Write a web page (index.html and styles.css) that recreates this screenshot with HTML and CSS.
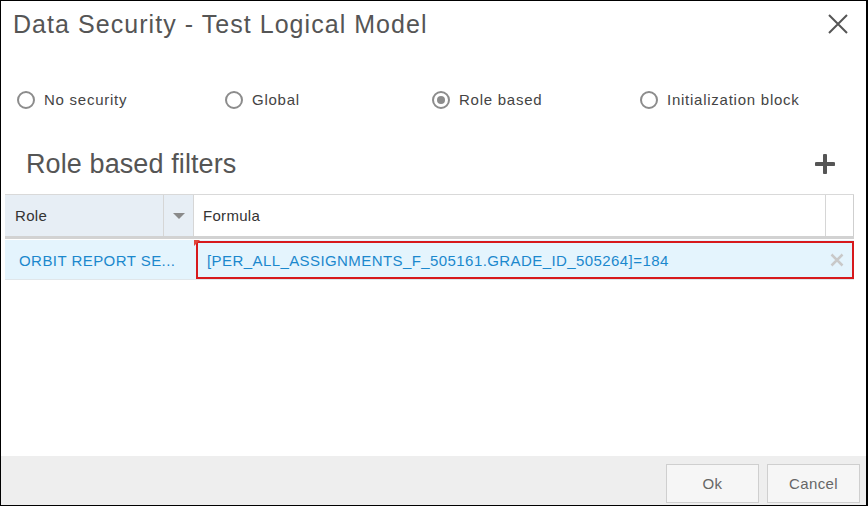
FILE: index.html
```html
<!DOCTYPE html>
<html>
<head>
<meta charset="utf-8">
<link rel="stylesheet" href="styles.css">
</head>
<body>
<div class="dialog">
  <div class="content">
    <div class="header">
      <div class="title">Data Security - Test Logical Model</div>
      <svg class="close" width="20" height="20" viewBox="0 0 20 20"><path d="M1 1 L19 19 M19 1 L1 19" stroke="#555" stroke-width="2" fill="none"/></svg>
    </div>
    <div class="radios">
      <label class="radio"><span class="circle"></span>No security</label>
      <label class="radio"><span class="circle"></span>Global</label>
      <label class="radio"><span class="circle checked"></span>Role based</label>
      <label class="radio"><span class="circle"></span>Initialization block</label>
    </div>
    <div class="section">
      <div class="heading">Role based filters</div>
      <svg class="plus" width="20" height="20" viewBox="0 0 20 20"><path d="M10 1.5 V18.5 M1.5 10 H18.5" stroke="#555" stroke-width="4" stroke-linecap="round" fill="none"/></svg>
    </div>
    <div class="table">
      <div class="thead">
        <div class="th role">Role</div>
        <div class="th sort"><span class="tri"></span></div>
        <div class="th formula">Formula</div>
        <div class="th last"></div>
      </div>
      <div class="trow">
        <div class="td role-val">ORBIT REPORT SE...</div>
        <div class="td formula-val">
          <span class="marker"></span>
          <div class="edit">
            <span class="ftext">[PER_ALL_ASSIGNMENTS_F_505161.GRADE_ID_505264]=184</span>
            <svg class="clear" width="14" height="14" viewBox="0 0 14 14"><path d="M1.5 1.5 L12.5 12.5 M12.5 1.5 L1.5 12.5" stroke="#c9c9c9" stroke-width="2.5" fill="none"/></svg>
          </div>
        </div>
      </div>
    </div>
  </div>
  <div class="footer">
    <button class="btn">Ok</button>
    <button class="btn">Cancel</button>
  </div>
</div>
</body>
</html>
```
FILE: styles.css
```css
* { box-sizing: border-box; }
html, body { margin: 0; padding: 0; background: #fff; }
body { font-family: "Liberation Sans", Arial, sans-serif; }

.dialog {
  width: 868px;
  height: 506px;
  border: 1px solid #000;
  border-right-width: 2px;
  display: flex;
  flex-direction: column;
  background: #fff;
}
.content { flex: 1; display: flex; flex-direction: column; }

.header {
  height: 46px;
  display: flex;
  align-items: center;
  justify-content: space-between;
  padding: 0 18px 0 12px;
}
.title {
  font-size: 25px;
  line-height: 48px;
  color: #555;
  letter-spacing: 1.05px;
}
.close { display: block; }

.radios {
  margin-top: 42px;
  height: 22px;
  display: grid;
  grid-template-columns: 208px 207px 208px 208px;
  padding-left: 16px;
}
.radio {
  display: flex;
  align-items: center;
  font-size: 15px;
  line-height: 22px;
  color: #444;
  letter-spacing: 0.75px;
}
.circle {
  width: 18px;
  height: 18px;
  border: 2px solid #8c8c8c;
  border-radius: 50%;
  margin-right: 9px;
  display: flex;
  align-items: center;
  justify-content: center;
}
.circle.checked::after {
  content: "";
  width: 8px;
  height: 8px;
  border-radius: 50%;
  background: #8c8c8c;
}

.section {
  margin-top: 33px;
  height: 40px;
  display: flex;
  align-items: center;
  justify-content: space-between;
  padding: 0 31px 0 25px;
}
.heading {
  font-size: 27px;
  line-height: 40px;
  color: #555;
  letter-spacing: 0.1px;
}
.plus { display: block; }

.table {
  margin: 10px 0 0 4px;
  width: 849px;
}
.thead {
  display: grid;
  grid-template-columns: 159px 30px 632px 28px;
  height: 45px;
  border-top: 1px solid #d9d9d9;
  border-bottom: 3px solid #d2d2d2;
}
.th {
  font-size: 15px;
  color: #333;
  display: flex;
  align-items: center;
  border-right: 1px solid #d6d6d6;
  letter-spacing: 0.3px;
}
.th.role { background: #e7eef5; padding-left: 10px; }
.th.sort { background: #e7eef5; justify-content: center; }
.th.formula { padding-left: 9px; }
.th.last { border-right: 1px solid #cfcfcf; }
.tri {
  width: 0; height: 0;
  border-left: 6px solid transparent;
  border-right: 6px solid transparent;
  border-top: 6px solid #8a8a8a;
  margin-left: 1px;
}

.trow {
  display: grid;
  grid-template-columns: 189px 660px;
  height: 41px;
  background: #e4f4fd;
  border-top: 1px solid #fff;
  border-bottom: 1px solid #e0e6ea;
}
.td { font-size: 15px; color: #1b88cd; }
.role-val {
  display: flex;
  align-items: center;
  padding-left: 14px;
  letter-spacing: 0.45px;
  padding-top: 1px;
}
.formula-val {
  position: relative;
  padding: 1px 0 0 2px;
}
.marker {
  position: absolute;
  left: 0;
  top: 0;
  width: 0; height: 0;
  border-top: 6px solid #e0463b;
  border-right: 6px solid transparent;
}
.edit {
  height: 38px;
  border: 2px solid #d7191c;
  display: flex;
  align-items: center;
  justify-content: space-between;
  padding: 0 8px 0 9px;
}
.ftext { letter-spacing: 0.42px; }
.clear { display: block; }

.footer {
  height: 49px;
  background: #eeeeee;
  display: flex;
  justify-content: flex-end;
  align-items: flex-start;
  gap: 8px;
  padding: 8px 6px 0 0;
}
.btn {
  width: 93px;
  height: 39px;
  background: #f6f6f6;
  border: 1px solid #cfcfcf;
  font-family: "Liberation Sans", Arial, sans-serif;
  font-size: 15px;
  color: #666;
  letter-spacing: 0.4px;
  padding: 0;
}
```
